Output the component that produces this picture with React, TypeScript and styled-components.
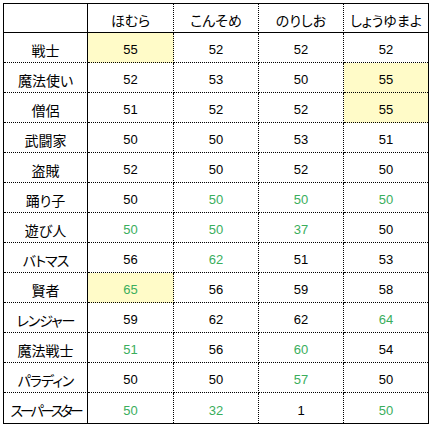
import React from "react";
import styled, { createGlobalStyle, css } from "styled-components";

const Global = createGlobalStyle`
  html, body { margin: 0; padding: 0; background: #fff; }
  body { font-family: "Noto Sans CJK JP", "Liberation Sans", sans-serif; color: #000; }
`;

const Page = styled.div`
  padding: 3px 0 0 3px;
`;

const Grid = styled.div`
  display: grid;
  grid-template-columns: 84px 86px 85px 85px 84px;
  grid-template-rows: 29px repeat(13, 30px);
  width: max-content;
  border: 1px solid #000;
`;

type CellProps = {
  $first?: boolean;
  $lastCol?: boolean;
  $header?: boolean;
  $lastRow?: boolean;
  $hl?: boolean;
  $green?: boolean;
  $num?: boolean;
  $tight?: number;
};

const Cell = styled.div<CellProps>`
  box-sizing: border-box;
  display: flex;
  align-items: center;
  justify-content: center;
  padding-top: 4px;
  white-space: nowrap;
  background: ${(p) => (p.$hl ? "#fffbc8" : "#fff")};
  color: ${(p) => (p.$green ? "#3aae5c" : "#000")};
  border-right: ${(p) =>
    p.$lastCol ? "none" : p.$first ? "1px solid #000" : "1px dotted #000"};
  border-bottom: ${(p) =>
    p.$lastRow ? "none" : p.$header ? "1px solid #000" : "1px dotted #000"};
  ${(p) =>
    p.$num
      ? css`
          font-family: "Liberation Sans", Arial, sans-serif;
          font-size: 13px;
        `
      : css`
          font-family: "Noto Sans CJK JP", sans-serif;
          font-size: 14px;
          font-feature-settings: "palt";
          letter-spacing: ${p.$tight ?? 0}px;
        `}
`;

const headers = ["", "ほむら", "こんそめ", "のりしお", "しょうゆまよ"];

type V = [number, string?];
const rows: { name: string; tight?: number; vals: V[] }[] = [
  { name: "戦士", vals: [[55, "y"], [52], [52], [52]] },
  { name: "魔法使い", vals: [[52], [53], [50], [55, "y"]] },
  { name: "僧侶", vals: [[51], [52], [52], [55, "y"]] },
  { name: "武闘家", vals: [[50], [50], [53], [51]] },
  { name: "盗賊", vals: [[52], [50], [52], [50]] },
  { name: "踊り子", vals: [[50], [50, "g"], [50, "g"], [50, "g"]] },
  { name: "遊び人", vals: [[50, "g"], [50, "g"], [37, "g"], [50]] },
  { name: "バトマス", tight: -1, vals: [[56], [62, "g"], [51], [53]] },
  { name: "賢者", vals: [[65, "gy"], [56], [59], [58]] },
  { name: "レンジャー", tight: -1, vals: [[59], [62], [62], [64, "g"]] },
  { name: "魔法戦士", vals: [[51, "g"], [56], [60, "g"], [54]] },
  { name: "パラディン", tight: -1, vals: [[50], [50], [57, "g"], [50]] },
  { name: "スーパースター", tight: -3, vals: [[50, "g"], [32, "g"], [1], [50, "g"]] },
];

export default function App() {
  return (
    <Page>
      <Global />
      <Grid>
        {headers.map((h, i) => (
          <Cell key={"h" + i} $header $first={i === 0} $lastCol={i === 4}>
            {h}
          </Cell>
        ))}
        {rows.map((r, ri) => {
          const last = ri === rows.length - 1;
          return (
            <React.Fragment key={r.name}>
              <Cell $first $lastRow={last} $tight={r.tight}>
                {r.name}
              </Cell>
              {r.vals.map(([n, f], ci) => (
                <Cell
                  key={ci}
                  $num
                  $lastRow={last}
                  $lastCol={ci === 3}
                  $hl={!!f && f.includes("y")}
                  $green={!!f && f.includes("g")}
                >
                  {n}
                </Cell>
              ))}
            </React.Fragment>
          );
        })}
      </Grid>
    </Page>
  );
}
